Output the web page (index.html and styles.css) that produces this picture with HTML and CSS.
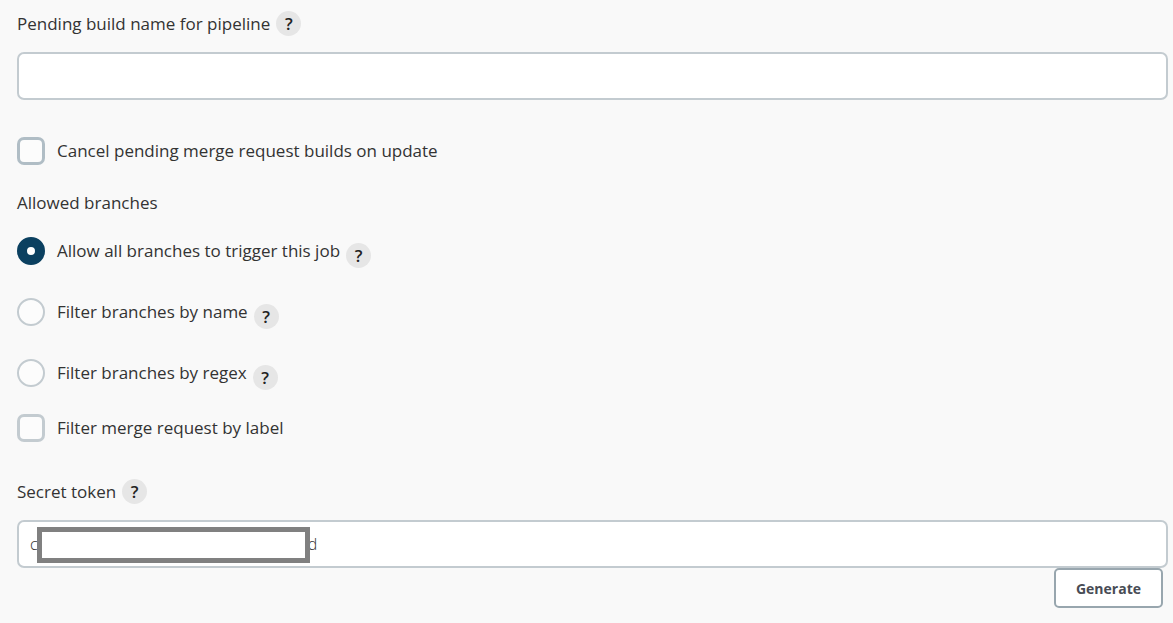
FILE: index.html
```html
<!DOCTYPE html>
<html lang="en">
<head>
<meta charset="utf-8">
<title>Build trigger settings</title>
<link rel="stylesheet" href="styles.css">
</head>
<body>
<form class="settings">
  <div class="field">
    <div class="field-head">
      <label for="pending-name">Pending build name for pipeline</label>
      <button type="button" class="help">?</button>
    </div>
    <input type="text" id="pending-name" class="text-input">
  </div>

  <div class="option option-check option-cancel">
    <input type="checkbox" id="cancel-pending" class="checkbox checkbox-strong">
    <label for="cancel-pending">Cancel pending merge request builds on update</label>
  </div>

  <fieldset class="branches">
    <legend>Allowed branches</legend>
    <div class="radio-list">
      <div class="option">
        <input type="radio" name="branches" id="allow-all" class="radio" checked>
        <label for="allow-all">Allow all branches to trigger this job</label>
        <button type="button" class="help">?</button>
      </div>
      <div class="option">
        <input type="radio" name="branches" id="by-name" class="radio">
        <label for="by-name">Filter branches by name</label>
        <button type="button" class="help">?</button>
      </div>
      <div class="option">
        <input type="radio" name="branches" id="by-regex" class="radio">
        <label for="by-regex">Filter branches by regex</label>
        <button type="button" class="help">?</button>
      </div>
    </div>
  </fieldset>

  <div class="option option-check option-label">
    <input type="checkbox" id="by-label" class="checkbox">
    <label for="by-label">Filter merge request by label</label>
  </div>

  <div class="field">
    <div class="field-head">
      <label for="token">Secret token</label>
      <button type="button" class="help">?</button>
    </div>
    <div class="token">
      <input type="text" id="token" class="text-input" value="c                                                                 d">
      <span class="token-mask"></span>
    </div>
  </div>
  <div class="actions">
    <button type="button" class="generate">Generate</button>
  </div>
</form>
</body>
</html>
```

FILE: styles.css
```css
* {
  box-sizing: border-box;
}

body {
  margin: 0;
  background: #f9f9f9;
  color: #333;
  font: 500 17px/28px "Open Sans", "Noto Sans", sans-serif;
}

.settings {
  padding: 11px 5px 15px 17px;
}

.field-head {
  display: flex;
  align-items: center;
  gap: 6px;
  height: 25px;
  margin-bottom: 16px;
}

.help {
  flex: none;
  width: 25px;
  height: 25px;
  padding: 0;
  border: 0;
  border-radius: 50%;
  background: #e6e6e6;
  color: #222;
  font: 600 17px/25px "Open Sans", "Noto Sans", sans-serif;
}

.text-input {
  display: block;
  width: 100%;
  height: 48px;
  padding: 0 11px;
  border: 2px solid #c3cbd0;
  border-radius: 7px;
  background: #fff;
  color: #333;
  font: 300 16px "Open Sans", "Noto Sans", sans-serif;
}

.option {
  display: flex;
  align-items: flex-start;
}

.option label {
  margin-left: 12px;
}

.option-check {
  align-items: center;
}

.option .help {
  margin: 6px 0 0 6px;
}

.option-cancel {
  margin: 37px 0 24px;
}

.option-label {
  margin: 24px 0 37px;
}

.checkbox,
.radio {
  appearance: none;
  flex: none;
  width: 28px;
  height: 28px;
  margin: 0;
  border: 2px solid #c3cbd0;
  background: #fcfcfc;
}

.checkbox {
  border-width: 3px;
  border-radius: 7px;
}

.checkbox-strong {
  border-color: #b0bdc5;
}

.radio {
  border-radius: 50%;
}

.radio:checked {
  border: 10px solid #0b4060;
  background: #fff;
}

.branches {
  margin: 0;
  padding: 0;
  border: 0;
}

.branches legend {
  padding: 0;
  margin-bottom: 20px;
}

.radio-list {
  display: grid;
  gap: 30px;
}

.token {
  position: relative;
}

.token-mask {
  position: absolute;
  left: 20px;
  top: 7px;
  width: 273px;
  height: 36px;
  border: 5px solid #808080;
  background: #fff;
}

.actions {
  display: flex;
  justify-content: flex-end;
  padding-right: 5px;
}

.generate {
  height: 40px;
  padding: 0 20px;
  border: 2px solid #98a6ae;
  border-radius: 5px;
  background: #fff;
  color: #484c55;
  font: 700 14px "Open Sans", "Noto Sans", sans-serif;
}
```
